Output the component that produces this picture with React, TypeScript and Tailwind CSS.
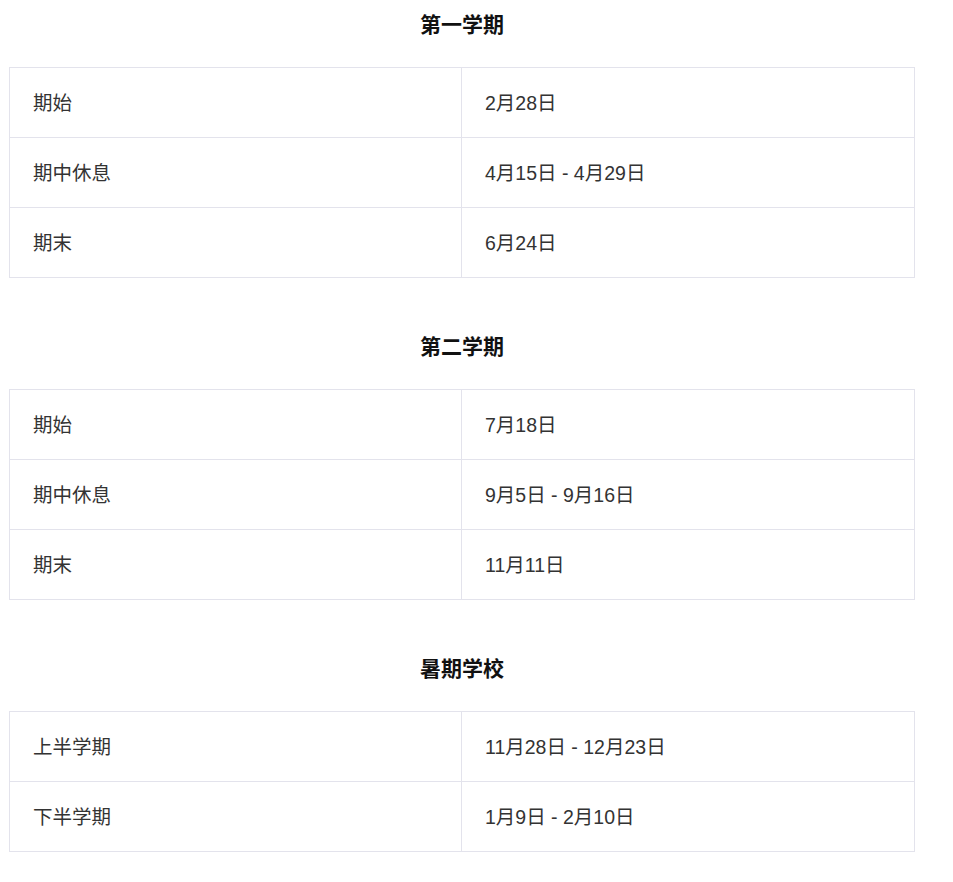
const sections = [
  {
    title: "第一学期",
    rows: [
      ["期始", "2月28日"],
      ["期中休息", "4月15日 - 4月29日"],
      ["期末", "6月24日"],
    ],
  },
  {
    title: "第二学期",
    rows: [
      ["期始", "7月18日"],
      ["期中休息", "9月5日 - 9月16日"],
      ["期末", "11月11日"],
    ],
  },
  {
    title: "暑期学校",
    rows: [
      ["上半学期", "11月28日 - 12月23日"],
      ["下半学期", "1月9日 - 2月10日"],
    ],
  },
];

export default function App() {
  return (
    <div className="bg-white min-h-[882px] pl-[9px] pt-[11px] text-[#333]">
      <div className="w-[906px] flex flex-col">
        {sections.map((s, i) => (
          <div key={s.title} className={i > 0 ? "mt-[55px]" : ""}>
            <h2
              className="text-center text-[21px] leading-[29px] font-bold text-[#111] mb-[27px]"
              style={{ fontFamily: '"Liberation Serif", "Noto Sans CJK SC", serif' }}
            >
              {s.title}
            </h2>
            <table
              className="w-full border-collapse table-fixed text-[19.5px]"
              style={{ fontFamily: '"Liberation Sans", "Noto Sans CJK SC", sans-serif' }}
            >
              <tbody>
                {s.rows.map(([a, b]) => (
                  <tr key={a} className="h-[70px]">
                    <td className="border border-[#e3e3ec] pl-[23px] pt-[3px] align-middle w-[452px]">{a}</td>
                    <td className="border border-[#e3e3ec] pl-[23px] pt-[3px] align-middle">{b}</td>
                  </tr>
                ))}
              </tbody>
            </table>
          </div>
        ))}
      </div>
    </div>
  );
}
